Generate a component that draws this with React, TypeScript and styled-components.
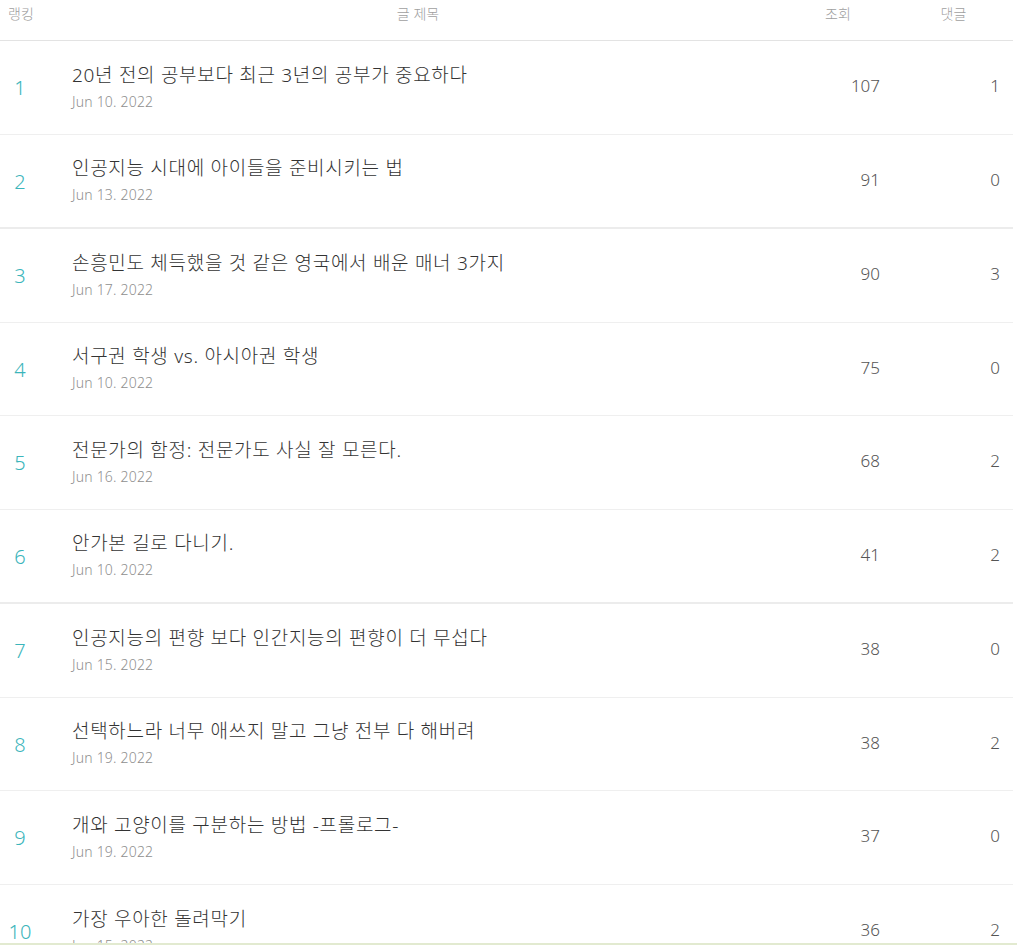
import styled, { createGlobalStyle } from "styled-components";

const GlobalStyle = createGlobalStyle`
  body {
    margin: 0;
    background: #fff;
    font-family: "Noto Sans", "Noto Sans CJK KR", sans-serif;
  }
`;

const posts = [
  { title: "20년 전의 공부보다 최근 3년의 공부가 중요하다", date: "Jun 10. 2022", views: 107, comments: 1 },
  { title: "인공지능 시대에 아이들을 준비시키는 법", date: "Jun 13. 2022", views: 91, comments: 0, thick: true },
  { title: "손흥민도 체득했을 것 같은 영국에서 배운 매너 3가지", date: "Jun 17. 2022", views: 90, comments: 3 },
  { title: "서구권 학생 vs. 아시아권 학생", date: "Jun 10. 2022", views: 75, comments: 0, short: true },
  { title: "전문가의 함정: 전문가도 사실 잘 모른다.", date: "Jun 16. 2022", views: 68, comments: 2 },
  { title: "안가본 길로 다니기.", date: "Jun 10. 2022", views: 41, comments: 2, thick: true },
  { title: "인공지능의 편향 보다 인간지능의 편향이 더 무섭다", date: "Jun 15. 2022", views: 38, comments: 0 },
  { title: "선택하느라 너무 애쓰지 말고 그냥 전부 다 해버려", date: "Jun 19. 2022", views: 38, comments: 2, short: true },
  { title: "개와 고양이를 구분하는 방법 -프롤로그-", date: "Jun 19. 2022", views: 37, comments: 0 },
  { title: "가장 우아한 돌려막기", date: "Jun 15. 2022", views: 36, comments: 2 },
];

const Board = styled.div`
  width: 1013px;
`;

const HeaderRow = styled.div`
  display: grid;
  grid-template-columns: 42px 1fr 100px 133px;
  height: 40px;
  border-bottom: 1px solid #e3e3e3;
  font-size: 14px;
  font-weight: 300;
  color: #a0a0a0;
  line-height: 27px;

  & > span {
    text-align: center;
  }
`;

const HeadTitle = styled.span`
  padding-left: 14px;
`;

const HeadViews = styled.span`
  padding-left: 16px;
`;

const HeadComments = styled.span`
  padding-left: 14px;
`;

const Row = styled.div<{ $thick?: boolean; $short?: boolean }>`
  display: grid;
  grid-template-columns: 40px 1fr 100px 133px;
  align-items: center;
  height: ${(p) => (p.$thick || p.$short ? 92 : 93)}px;
  border-bottom: ${(p) => (p.$thick ? "2px solid #ececec" : "1px solid #efefef")};
`;

const Rank = styled.div`
  text-align: center;
  font-size: 20px;
  font-weight: 300;
  color: #3bb5bb;
`;

const TitleCell = styled.div`
  padding-left: 32px;
  padding-bottom: 2px;
`;

const Title = styled.div`
  font-size: 19px;
  font-weight: 300;
  letter-spacing: 0.7px;
  color: #333;
  line-height: 26px;
`;

const DateText = styled.div`
  font-size: 14px;
  font-weight: 300;
  letter-spacing: 0.2px;
  color: #8f8f8f;
  line-height: 20px;
  margin-top: 4px;
`;

const Num = styled.div<{ $pad?: number }>`
  text-align: right;
  font-size: 17px;
  font-weight: 300;
  color: #555;
  padding-bottom: 4px;
  padding-right: ${(p) => p.$pad ?? 0}px;
`;

const BottomEdge = styled.div`
  position: fixed;
  left: 0;
  right: 0;
  bottom: 0;
  height: 2px;
  background: #e2ead0;
`;

export default function App() {
  return (
    <>
      <GlobalStyle />
      <Board>
        <HeaderRow>
          <span>랭킹</span>
          <HeadTitle>글 제목</HeadTitle>
          <HeadViews>조회</HeadViews>
          <HeadComments>댓글</HeadComments>
        </HeaderRow>
        {posts.map((p, i) => (
          <Row key={i} $thick={p.thick} $short={p.short}>
            <Rank>{i + 1}</Rank>
            <TitleCell>
              <Title>{p.title}</Title>
              <DateText>{p.date}</DateText>
            </TitleCell>
            <Num>{p.views}</Num>
            <Num $pad={13}>{p.comments}</Num>
          </Row>
        ))}
      </Board>
      <BottomEdge />
    </>
  );
}
